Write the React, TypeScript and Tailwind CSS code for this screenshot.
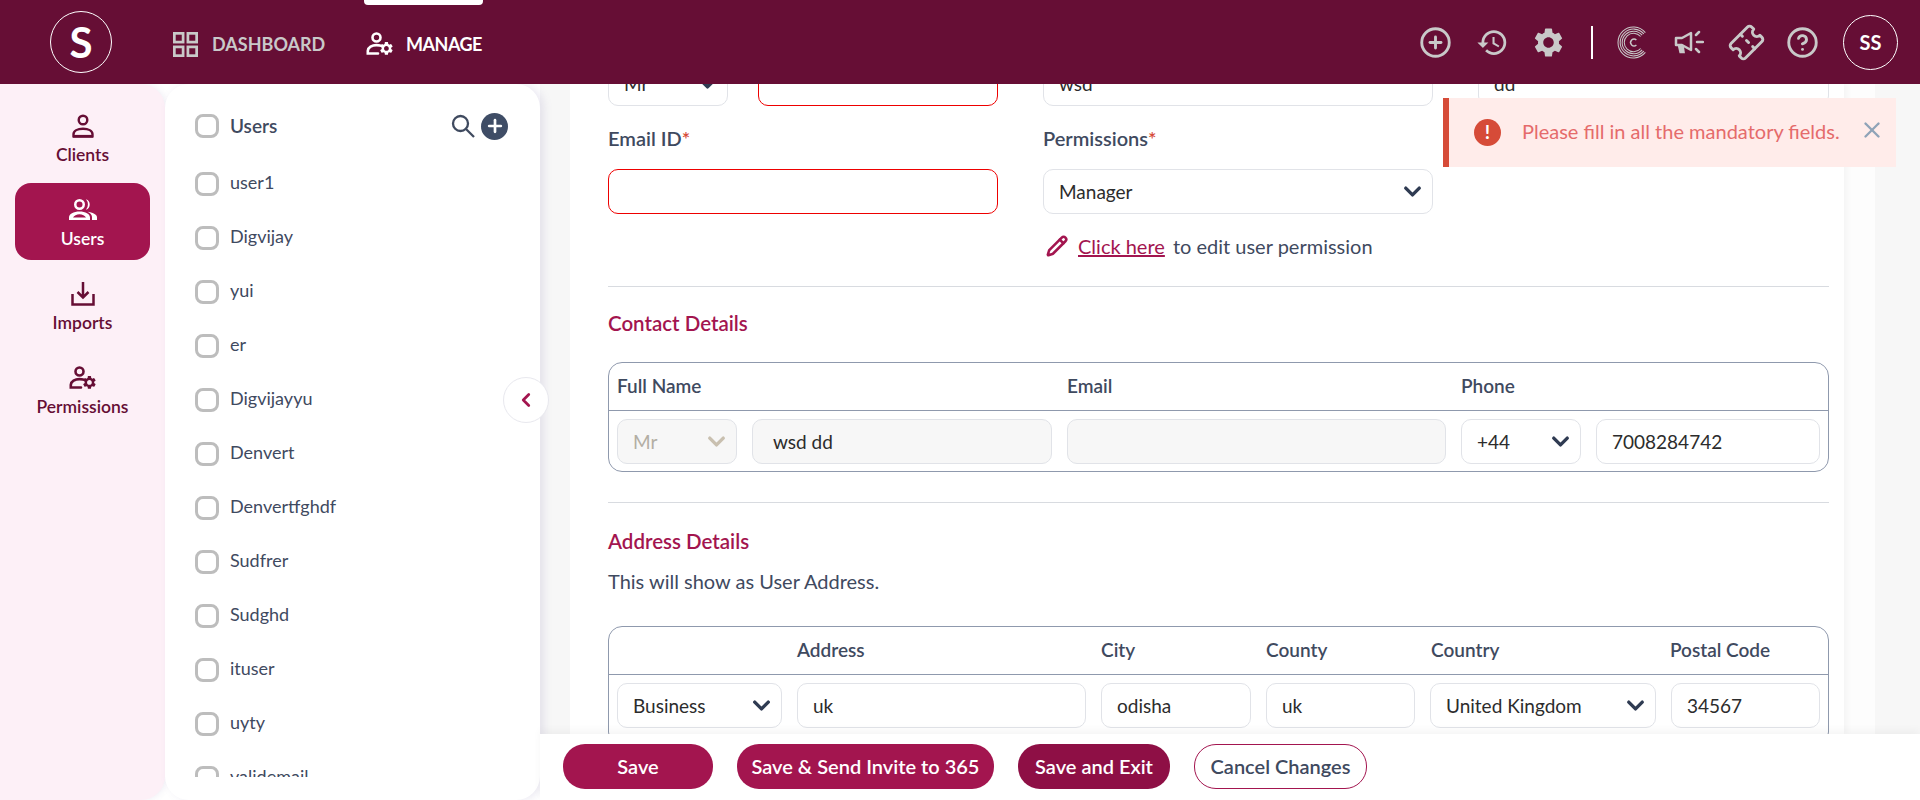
import React from "react";
import { ChevronDown, ChevronLeft, Plus, X, CircleHelp, CirclePlus, Ticket, Pencil } from "lucide-react";

const GEAR = "M19.14 12.94c.04-.3.06-.61.06-.94 0-.32-.02-.64-.07-.94l2.03-1.58a.49.49 0 0 0 .12-.61l-1.92-3.32a.488.488 0 0 0-.59-.22l-2.39.96c-.5-.38-1.03-.7-1.62-.94l-.36-2.54a.484.484 0 0 0-.48-.41h-3.84c-.24 0-.43.17-.47.41l-.36 2.54c-.59.24-1.13.57-1.62.94l-2.39-.96c-.22-.08-.47 0-.59.22L2.74 8.87c-.12.21-.08.47.12.61l2.03 1.58c-.05.3-.09.63-.09.94s.02.64.07.94l-2.03 1.58a.49.49 0 0 0-.12.61l1.92 3.32c.12.22.37.29.59.22l2.39-.96c.5.38 1.03.7 1.62.94l.36 2.54c.05.24.24.41.48.41h3.84c.24 0 .44-.17.47-.41l.36-2.54c.59-.24 1.13-.56 1.62-.94l2.39.96c.22.08.47 0 .59-.22l1.92-3.32c.12-.22.07-.47-.12-.61l-2.01-1.58zM12 15.6c-1.98 0-3.6-1.62-3.6-3.6s1.62-3.6 3.6-3.6 3.6 1.62 3.6 3.6-1.62 3.6-3.6 3.6z";
const HISTORY = "M13 3a9 9 0 0 0-9 9H1l3.89 3.89.07.14L9 12H6c0-3.87 3.13-7 7-7s7 3.13 7 7-3.13 7-7 7c-1.93 0-3.68-.79-4.94-2.06l-1.42 1.42A8.954 8.954 0 0 0 13 21a9 9 0 0 0 0-18zm-1 5v5l4.28 2.54.72-1.21-3.5-2.08V8H12z";

function UserGear({ className }: { className?: string }) {
  return (
    <svg viewBox="0 0 28 24" className={`shrink-0 ${className}`} fill="none" stroke="currentColor" strokeWidth="2.6">
      <circle cx="10.5" cy="5.5" r="4" />
      <path d="M14 13.6c-1-.3-2.2-.5-3.5-.5C6 13.100 2 15.400 1.800 18.800c0 .8 0 1.800 0 2.700H12" strokeLinecap="round" />
      <g transform="translate(12.500 8.500) scale(.66)">
        <path d={GEAR} fill="currentColor" stroke="none" />
      </g>
    </svg>
  );
}

function Field({ w, value, error, disabled, muted, chevron, wide }: { w: string; value?: string; error?: boolean; disabled?: boolean; muted?: boolean; chevron?: boolean; wide?: boolean }) {
  const tone = error ? "border-[#ee0000] bg-white" : disabled ? "border-[#e1e3e8] bg-[#f7f7f7]" : "border-[#e1e3e8] bg-white";
  return (
    <div className={`${w} h-[45px] shrink-0 flex items-center justify-between rounded-[10px] border-[1.5px] ${wide ? "pl-[20px]" : "pl-[15px]"} pr-[6px] ${tone}`}>
      <span className={`text-[19px] mt-[1px] ${muted ? "text-[#b3aea4]" : "text-[#2c2c2c]"}`}>{value}</span>
      {chevron && <ChevronDown size={27} strokeWidth={3} className={muted ? "text-[#c9c0b0]" : "text-[#2f3b52]"} />}
    </div>
  );
}

const users = ["user1", "Digvijay", "yui", "er", "Digvijayyu", "Denvert", "Denvertfghdf", "Sudfrer", "Sudghd", "ituser", "uyty", "validemail"];

function Check() {
  return <span className="w-[24px] h-[24px] shrink-0 rounded-[8px] border-[3px] border-[#bdbdbd] bg-white" />;
}

function Nav({ label, active, children }: { label: string; active?: boolean; children: React.ReactNode }) {
  return (
    <div className={`mx-[15px] h-[77px] shrink-0 rounded-[16px] flex flex-col items-center justify-center gap-[6px] pt-[4px] ${active ? "bg-[#a3154f] text-white" : "text-[#660e35]"}`}>
      <div className="h-[24px] flex items-center justify-center">{children}</div>
      <span className="text-[17.500px] font-semibold leading-[22px]">{label}</span>
    </div>
  );
}

export default function App() {
  return (
    <div className="h-screen w-full overflow-hidden flex flex-col bg-white font-['Lato','Noto_Sans',sans-serif]">
      <header className="relative z-20 h-[84px] shrink-0 bg-[#660e35] flex items-center">
        <div className="ml-[50px] w-[62px] h-[62px] rounded-full border border-white flex items-center justify-center text-white text-[42px] font-bold leading-none">S</div>
        <div className="ml-[61px] flex items-center gap-[14px] text-[#c9c9c9] mt-[4px]">
          <svg viewBox="0 0 24 24" className="w-[25px] h-[25px] shrink-0" fill="none" stroke="currentColor" strokeWidth="2.6">
            <rect x="1.300" y="1.300" width="8.400" height="8.400" />
            <rect x="14.300" y="1.300" width="8.400" height="8.400" />
            <rect x="1.300" y="14.300" width="8.400" height="8.400" />
            <rect x="14.300" y="14.300" width="8.400" height="8.400" />
          </svg>
          <span className="text-[18px] font-bold w-[113px] whitespace-nowrap">DASHBOARD</span>
        </div>
        <div className="relative ml-[39px] w-[119px] h-full flex items-center gap-[12px] pl-[2px] text-white">
          <span className="absolute left-0 top-0 w-[119px] h-[5px] bg-white rounded-b-[4px]" />
          <UserGear className="w-[28px] h-[24px] mt-[4px]" />
          <span className="text-[18px] font-bold tracking-[-0.5px] mt-[4px]">MANAGE</span>
        </div>
        <div className="ml-auto flex items-center text-[#c9c9c9]">
          <CirclePlus size={33} strokeWidth={2.100} />
          <svg viewBox="0 0 24 24" className="w-[33px] h-[33px] ml-[24px]" fill="currentColor"><path d={HISTORY} /></svg>
          <svg viewBox="0 0 24 24" className="w-[35px] h-[35px] ml-[22px]" fill="currentColor"><path d={GEAR} /></svg>
          <span className="w-[2px] h-[33px] bg-white ml-[25px]" />
          <svg viewBox="0 0 32 32" className="w-[33px] h-[33px] ml-[24px]" fill="none" stroke="currentColor" strokeWidth="1">
            <path d="M27.500 6.400A15 15 0 1 0 27.500 25.600" />
            <path d="M26 7.600A13 13 0 1 0 26 24.400" />
            <path d="M24.400 8.900A11 11 0 1 0 24.400 23.100" />
            <path d="M22.900 10.200A9 9 0 1 0 22.900 21.800" />
            <path d="M18.800 13.600A3.300 3.300 0 1 0 18.800 18.400" strokeWidth="1.400" />
          </svg>
          <svg viewBox="0 0 30 24" className="w-[30px] h-[24px] ml-[24px]" fill="none" stroke="currentColor" strokeWidth="2.500">
            <path d="M2 8h6l9-5v17l-9-5H2z" strokeLinejoin="round" />
            <path d="M5 15.500l1.500 6.500h3l-1-6.500" fill="currentColor" />
            <path d="M22 5l3-3M23 12h6M22 19l3 3" strokeLinecap="round" />
          </svg>
          <Ticket size={35} strokeWidth={2} className="ml-[25px] -rotate-45" />
          <CircleHelp size={33} strokeWidth={2.100} className="ml-[22px]" />
          <div className="ml-[24px] mr-[22px] w-[55px] h-[55px] rounded-full border border-white flex items-center justify-center text-white text-[20px] font-bold">SS</div>
        </div>
      </header>

      <div className="relative flex-1 min-h-0 flex bg-white">
        <aside className="relative z-10 w-[165px] shrink-0 bg-[#fdf0f7] rounded-r-[24px] shadow-[2px_0_6px_rgba(120,110,170,0.10)] pt-[15px] flex flex-col gap-[7px]">
          <Nav label="Clients">
            <svg viewBox="0 0 24 24" className="w-[24px] h-[24px]" fill="none" stroke="currentColor" strokeWidth="2.400">
              <circle cx="12" cy="6" r="4.300" />
              <path d="M2.500 22.300v-2c0-3.500 4-5.500 9.500-5.500s9.500 2 9.500 5.500v2z" />
              <path d="M2 22.300h20" strokeWidth="2.800" />
            </svg>
          </Nav>
          <Nav label="Users" active>
            <svg viewBox="0 0 28 22" className="w-[28px] h-[22px]" fill="currentColor">
              <path d="M10.500 0a5.500 5.500 0 1 1 0 11 5.500 5.500 0 0 1 0-11zm0 2.500a3 3 0 1 0 0 6 3 3 0 0 0 0-6zM17 .3a5.500 5.500 0 0 1 0 10.400 8 8 0 0 0 0-10.400z" />
              <path d="M0 21v-2.500c0-3.500 4.500-6 10.500-6s10.500 2.500 10.500 6V21zm4-2.500h13c-1-2-3.700-3.300-6.500-3.300S5 16.500 4 18.500zM18.500 12.800c5 .4 9.500 2.700 9.500 5.700V21h-5v-3c0-2-1.700-3.900-4.500-5.200z" />
            </svg>
          </Nav>
          <Nav label="Imports">
            <svg viewBox="0 0 24 24" className="w-[24px] h-[24px]" fill="none" stroke="currentColor" strokeWidth="2.500">
              <path d="M12 0v15M6.500 10l5.500 5.500 5.500-5.500" />
              <path d="M1.500 12v10.500h21V12" />
            </svg>
          </Nav>
          <Nav label="Permissions">
            <UserGear className="w-[28px] h-[24px]" />
          </Nav>
        </aside>

        <section className="relative z-10 w-[375px] shrink-0 bg-white rounded-[24px] shadow-[4px_0_8px_rgba(120,110,170,0.15)] flex flex-col pl-[30px] pr-[32px]">
          <div className="flex items-center h-[24px] mt-[30px] shrink-0">
            <Check />
            <span className="ml-[11px] text-[19px] font-semibold text-[#3f4a5f]">Users</span>
            <svg viewBox="0 0 24 24" className="ml-auto w-[24px] h-[24px] text-[#3f4a5f]" fill="none" stroke="currentColor" strokeWidth="2.300">
              <circle cx="9.500" cy="9.500" r="7.500" />
              <path d="M15 15l8 8" />
            </svg>
            <span className="ml-[6px] w-[27px] h-[27px] rounded-full bg-[#3f4d66] flex items-center justify-center text-white"><Plus size={20} strokeWidth={3.200} /></span>
          </div>
          <div className="mt-[34px] h-[605px] overflow-hidden flex flex-col gap-[30px]">
            {users.map((u) => (
              <div key={u} className="flex items-center gap-[11px] h-[24px] shrink-0">
                <Check />
                <span className="text-[18px] text-[#3f4a5f] -mt-[3px]">{u}</span>
              </div>
            ))}
          </div>
        </section>

        <button className="absolute z-20 left-[503px] top-[293px] w-[46px] h-[46px] rounded-full bg-white border border-[#e8e8ee] flex items-center justify-center text-[#a3154f]">
          <ChevronLeft size={22} strokeWidth={3} />
        </button>

        <main className="flex-1 min-w-0 flex flex-col">
          <div className="flex-1 min-h-0 overflow-hidden bg-[#f7f7f7] pl-[30px] pr-[75px]">
            <div className="h-full w-[1274px] flex flex-col bg-white shadow-[4px_0_5px_rgba(0,0,0,0.03),31px_0_0_#fdfdfd] pl-[38px] pr-[15px]">
              <div className="-mt-[23px] flex flex-col shrink-0">
                <div className="flex">
                  <Field w="w-[120px]" value="Mr" chevron />
                  <div className="ml-[30px]"><Field w="w-[240px]" error /></div>
                  <div className="ml-[45px]"><Field w="w-[390px]" value="wsd" /></div>
                  <div className="ml-[45px]"><Field w="w-[351px]" value="dd" /></div>
                </div>
                <div className="flex mt-[18px] h-[28px] items-center text-[20px] font-semibold text-[#3f4a5f]">
                  <span className="w-[435px]">Email ID<span className="text-[#d64b38]">*</span></span>
                  <span>Permissions<span className="text-[#d64b38]">*</span></span>
                </div>
                <div className="flex mt-[17px]">
                  <Field w="w-[390px]" error />
                  <div className="ml-[45px]"><Field w="w-[390px]" value="Manager" chevron /></div>
                </div>
                <div className="ml-[435px] mt-[20px] h-[24px] flex items-center text-[20px] text-[#3f4a5f]">
                  <Pencil size={22} strokeWidth={2.800} className="text-[#a3154f] ml-[3px]" />
                  <span className="ml-[10px] text-[#a3154f] underline">Click here</span>
                  <span className="ml-[8px]">to edit user permission</span>
                </div>
                <div className="mt-[28px] border-t-[1.5px] border-[#d8dbe0]" />
                <h2 className="mt-[21px] h-[30px] flex items-center text-[20.500px] font-semibold text-[#a3154f]">Contact Details</h2>
                <div className="mt-[24px] h-[110px] shrink-0 rounded-[14px] border-[1.5px] border-[#8f99ad]">
                  <div className="h-[48px] flex items-center pl-[8px] text-[19px] font-semibold text-[#3f4a5f] border-b-[1.5px] border-[#8f99ad]">
                    <span className="w-[450px]">Full Name</span>
                    <span className="w-[394px]">Email</span>
                    <span>Phone</span>
                  </div>
                  <div className="flex pl-[8px] pt-[8px]">
                    <Field w="w-[120px]" value="Mr" disabled muted chevron />
                    <div className="ml-[15px]"><Field w="w-[300px]" value="wsd dd" disabled wide /></div>
                    <div className="ml-[15px]"><Field w="w-[379px]" disabled /></div>
                    <div className="ml-[15px]"><Field w="w-[120px]" value="+44" chevron /></div>
                    <div className="ml-[15px]"><Field w="w-[224px]" value="7008284742" /></div>
                  </div>
                </div>
                <div className="mt-[30px] border-t-[1.5px] border-[#d8dbe0]" />
                <h2 className="mt-[23px] h-[30px] flex items-center text-[20.500px] font-semibold text-[#a3154f]">Address Details</h2>
                <p className="mt-[12px] h-[26px] flex items-center text-[20px] text-[#3f4a5f]">This will show as User Address.</p>
                <div className="mt-[32px] h-[120px] shrink-0 rounded-[14px] border-[1.5px] border-[#8f99ad]">
                  <div className="h-[48px] flex items-center text-[19px] font-semibold text-[#3f4a5f] border-b-[1.5px] border-[#8f99ad]">
                    <span className="ml-[188px] w-[304px]">Address</span>
                    <span className="w-[165px]">City</span>
                    <span className="w-[165px]">County</span>
                    <span className="w-[239px]">Country</span>
                    <span>Postal Code</span>
                  </div>
                  <div className="flex pl-[8px] pt-[8px]">
                    <Field w="w-[165px]" value="Business" chevron />
                    <div className="ml-[15px]"><Field w="w-[289px]" value="uk" /></div>
                    <div className="ml-[15px]"><Field w="w-[150px]" value="odisha" /></div>
                    <div className="ml-[15px]"><Field w="w-[149px]" value="uk" /></div>
                    <div className="ml-[15px]"><Field w="w-[226px]" value="United Kingdom" chevron /></div>
                    <div className="ml-[15px]"><Field w="w-[149px]" value="34567" /></div>
                  </div>
                </div>
              </div>
            </div>
          </div>
          <footer className="relative z-10 h-[66px] shrink-0 bg-white shadow-[0_-4px_8px_rgba(0,0,0,0.04)] flex items-center pl-[23px] pb-[2px] text-[20px] font-semibold">
            <button className="w-[150px] h-[45px] rounded-[22px] bg-[#a3154f] text-white">Save</button>
            <button className="ml-[24px] w-[257px] h-[45px] rounded-[22px] bg-[#a3154f] text-white whitespace-nowrap">Save &amp; Send Invite to 365</button>
            <button className="ml-[24px] w-[152px] h-[45px] rounded-[22px] bg-[#8e0f45] text-white whitespace-nowrap">Save and Exit</button>
            <button className="ml-[24px] w-[173px] h-[45px] rounded-[22px] bg-white border border-[#a3154f] text-[#3f4a5f] whitespace-nowrap">Cancel Changes</button>
          </footer>
        </main>

        <div className="absolute z-30 left-[1443px] top-[14px] w-[453px] h-[69px] bg-[#ffecea] border-l-[6px] border-[#d64b38] flex items-center">
          <span className="ml-[25px] w-[27px] h-[27px] rounded-full bg-[#d64b38] text-white flex items-center justify-center text-[19px] font-bold">!</span>
          <span className="ml-[21px] -mt-[4px] text-[20px] text-[#e56b6b] whitespace-nowrap">Please fill in all the mandatory fields.</span>
          <X size={26} strokeWidth={2.200} className="ml-auto mr-[11px] -mt-[6px] text-[#8fa3b8]" />
        </div>
      </div>
    </div>
  );
}
